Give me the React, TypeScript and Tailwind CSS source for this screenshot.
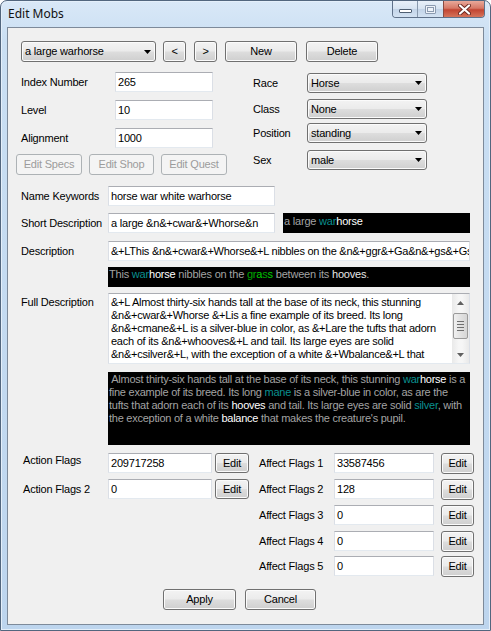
import React from 'react';

const btnOn =
  'border-[#707070] text-black bg-[linear-gradient(#f3f3f3,#ebebeb_48%,#dddddd_52%,#cfcfcf)] shadow-[inset_0_0_0_1px_#fbfbfb]';
const btnOff = 'border-[#adb2b5] text-[#9c9c9c] bg-[#f4f4f4]';

function Btn({ label, className = '', disabled = false }: { label: string; className?: string; disabled?: boolean }) {
  return (
    <div
      className={`flex shrink-0 items-center justify-center rounded-[3px] border text-[11px] leading-none ${
        disabled ? btnOff : btnOn
      } ${className}`}
    >
      {label}
    </div>
  );
}

function Arrow() {
  return (
    <svg width="7" height="4" viewBox="0 0 7 4" className="shrink-0">
      <polygon points="0,0 7,0 3.5,4" fill="#000" />
    </svg>
  );
}

function Combo({ value, className = '' }: { value: string; className?: string }) {
  return (
    <div
      className={`flex shrink-0 items-center rounded-[3px] border pl-[3px] pr-[4px] text-[11px] leading-none ${btnOn} ${className}`}
    >
      <span className="flex-1">{value}</span>
      <Arrow />
    </div>
  );
}

function TextBox({ value, className = '' }: { value: string; className?: string }) {
  return (
    <div
      className={`flex h-[20px] shrink-0 items-center overflow-hidden whitespace-nowrap border border-[#dbdfe6] border-t-[#abadb3] border-b-[#e3e9ef] bg-white px-[2px] text-[11px] leading-none ${className}`}
    >
      {value}
    </div>
  );
}

const G = 'text-[#a3a3a3]';
const C = 'text-[#0a8f8f]';
const W = 'text-white';

function ScrollBar() {
  return (
    <div className="flex w-[17px] shrink-0 flex-col items-center bg-[linear-gradient(90deg,#e9e9e9,#f6f6f6_40%,#f6f6f6_60%,#e9e9e9)]">
      <div className="flex h-[17px] w-full items-center justify-center">
        <svg width="7" height="4" viewBox="0 0 7 4">
          <polygon points="0,4 7,4 3.5,0" fill="#606060" />
        </svg>
      </div>
      <div className="mt-[2px] flex h-[26px] w-[15px] flex-col items-center justify-center gap-[2px] rounded-[2px] border border-[#9a9a9a] bg-[linear-gradient(90deg,#f0f0f0,#e2e2e2_50%,#d6d6d6)]">
        <div className="h-px w-[7px] bg-[#6f6f6f]" />
        <div className="h-px w-[7px] bg-[#6f6f6f]" />
        <div className="h-px w-[7px] bg-[#6f6f6f]" />
        <div className="h-px w-[7px] bg-[#6f6f6f]" />
      </div>
      <div className="flex-1" />
      <div className="flex h-[17px] w-full items-center justify-center">
        <svg width="7" height="4" viewBox="0 0 7 4">
          <polygon points="0,0 7,0 3.5,4" fill="#606060" />
        </svg>
      </div>
    </div>
  );
}

function CaptionButtons() {
  return (
    <div className="mr-[5px] flex h-[17px] overflow-hidden rounded-b-[4px] border border-t-0 border-[#5f7189]">
      <div className="flex w-[25px] items-center justify-center border-r border-[#8899ad] bg-[linear-gradient(#e8f0f9,#d6e3f1_50%,#c3d4e8_52%,#d3e2f2)]">
        <div className="mt-[4px] h-[4px] w-[13px] rounded-[1px] border border-[#4f5f72] bg-white" />
      </div>
      <div className="flex w-[26px] items-center justify-center border-r border-[#8a4a40] bg-[linear-gradient(#e8f0f9,#d6e3f1_50%,#c3d4e8_52%,#d3e2f2)]">
        <div className="flex h-[9px] w-[11px] items-center justify-center rounded-[1px] border border-[#8c9bb0] bg-[#eef3f9]">
          <div className="h-[5px] w-[7px] border border-[#8c9bb0]" />
        </div>
      </div>
      <div className="flex w-[40px] items-center justify-center bg-[linear-gradient(#e9a99a,#d67866_45%,#c24532_55%,#d5745a)]">
        <svg width="13" height="11" viewBox="0 0 13 11">
          <path d="M2 1.5 L11 9.5 M11 1.5 L2 9.5" stroke="#6b2a22" strokeWidth="4" strokeLinecap="round" />
          <path d="M2 1.5 L11 9.5 M11 1.5 L2 9.5" stroke="#ffffff" strokeWidth="2.2" strokeLinecap="round" />
        </svg>
      </div>
    </div>
  );
}

export default function App() {
  return (
    <div className="font-['Liberation_Sans',Arial,sans-serif] text-black">
      <div className="flex h-[631px] w-[491px] flex-col rounded-t-[7px] border border-[#52667e] bg-[linear-gradient(180deg,#d9e8f7,#cadff3_40px,#bdd5ee)] shadow-[inset_0_0_0_1px_#e4effa]">
        {/* Title bar */}
        <div className="flex h-[26px] shrink-0 items-start">
          <span className="ml-[7px] mt-[5px] font-['Noto_Sans','Liberation_Sans',sans-serif] text-[12px] leading-[16px] text-[#111]">
            Edit Mobs
          </span>
          <div className="flex-1" />
          <CaptionButtons />
        </div>

        {/* Client */}
        <div className="mx-[6px] mb-[5px] flex-1 border border-[#7d8a9a] bg-[#f0f0f0] tracking-[-0.2px]">
          {/* Row 1 */}
          <div className="ml-[13px] mt-[13px] flex items-center">
            <Combo value="a large warhorse" className="h-[21px] w-[135px]" />
            <Btn label="<" className="ml-[7px] h-[21px] w-[23px]" />
            <Btn label=">" className="ml-[8px] h-[21px] w-[23px]" />
            <Btn label="New" className="ml-[8px] h-[21px] w-[72px]" />
            <Btn label="Delete" className="ml-[9px] h-[21px] w-[72px]" />
          </div>

          {/* Row 2: stats + combos */}
          <div className="mt-[10px] flex h-[103px]">
            <div className="w-[245px] shrink-0">
              <div className="ml-[13px] flex h-[20px] items-center">
                <span className="w-[94px] text-[11px]">Index Number</span>
                <TextBox value="265" className="w-[98px]" />
              </div>
              <div className="ml-[13px] mt-[8px] flex h-[20px] items-center">
                <span className="w-[94px] text-[11px]">Level</span>
                <TextBox value="10" className="w-[98px]" />
              </div>
              <div className="ml-[13px] mt-[8px] flex h-[20px] items-center">
                <span className="w-[94px] text-[11px]">Alignment</span>
                <TextBox value="1000" className="w-[98px]" />
              </div>
              <div className="ml-[8px] mt-[6px] flex">
                <Btn label="Edit Specs" disabled className="h-[21px] w-[66px]" />
                <Btn label="Edit Shop" disabled className="ml-[7px] h-[21px] w-[65px]" />
                <Btn label="Edit Quest" disabled className="ml-[7px] h-[21px] w-[66px]" />
              </div>
            </div>
            <div className="flex-1">
              <div className="mt-[1px] flex h-[20px] items-center">
                <span className="w-[54px] text-[11px]">Race</span>
                <Combo value="Horse" className="h-[20px] w-[120px]" />
              </div>
              <div className="mt-[6px] flex h-[20px] items-center">
                <span className="w-[54px] text-[11px]">Class</span>
                <Combo value="None" className="h-[20px] w-[120px]" />
              </div>
              <div className="mt-[4px] flex h-[20px] items-center">
                <span className="w-[54px] text-[11px]">Position</span>
                <Combo value="standing" className="h-[20px] w-[120px]" />
              </div>
              <div className="mt-[7px] flex h-[20px] items-center">
                <span className="w-[54px] text-[11px]">Sex</span>
                <Combo value="male" className="h-[20px] w-[120px]" />
              </div>
            </div>
          </div>

          {/* Descriptions */}
          <div className="ml-[13px] mt-[11px] flex h-[20px] items-center">
            <span className="w-[87px] text-[11px]">Name Keywords</span>
            <TextBox value="horse war white warhorse" className="w-[167px]" />
          </div>
          <div className="ml-[13px] mt-[7px] flex h-[20px] items-center">
            <span className="w-[87px] text-[11px]">Short Description</span>
            <TextBox value="a large &n&+cwar&+Whorse&n" className="w-[167px]" />
            <div className="ml-[8px] h-[20px] w-[187px] bg-black pl-[1px] pt-[2px] text-[11px] leading-[13px]">
              <span className={G}>a large </span>
              <span className={C}>war</span>
              <span className={W}>horse</span>
            </div>
          </div>
          <div className="ml-[13px] mt-[8px] flex h-[20px] items-center">
            <span className="w-[87px] text-[11px]">Description</span>
            <TextBox
              value="&+LThis &n&+cwar&+Whorse&+L nibbles on the &n&+ggr&+Ga&n&+gs&+Gs&"
              className="w-[362px] tracking-[-0.25px]"
            />
          </div>
          <div className="ml-[100px] mt-[6px] h-[20px] w-[362px] whitespace-nowrap bg-black pl-[1px] pt-px text-[11px] leading-[13px]">
            <span className={G}>This </span>
            <span className={C}>war</span>
            <span className={W}>horse</span>
            <span className={G}> nibbles on the </span>
            <span className="text-[#00a400]">gr</span>
            <span className="text-[#00d000]">a</span>
            <span className="text-[#00a400]">s</span>
            <span className="text-[#00d000]">s</span>
            <span className={G}> between its </span>
            <span className="text-[#e6e6e6]">hooves</span>
            <span className={G}>.</span>
          </div>
          <div className="ml-[13px] mt-[6px] flex">
            <span className="w-[87px] pt-[3px] text-[11px] leading-[13px]">Full Description</span>
            <div className="flex h-[71px] w-[362px] border border-[#dbdfe6] border-t-[#abadb3] border-b-[#e3e9ef] bg-white">
              <div className="flex-1 overflow-hidden whitespace-nowrap pl-[2px] pt-[2px] text-[11px] leading-[13px] tracking-[-0.25px]">
                <div>&amp;+L Almost thirty-six hands tall at the base of its neck, this stunning</div>
                <div>&amp;n&amp;+cwar&amp;+Whorse &amp;+Lis a fine example of its breed. Its long</div>
                <div>&amp;n&amp;+cmane&amp;+L is a silver-blue in color, as &amp;+Lare the tufts that adorn</div>
                <div>each of its &amp;n&amp;+whooves&amp;+L and tail. Its large eyes are solid</div>
                <div>&amp;n&amp;+csilver&amp;+L, with the exception of a white &amp;+Wbalance&amp;+L that</div>
              </div>
              <ScrollBar />
            </div>
          </div>
          <div className="ml-[100px] mt-[8px] h-[73px] w-[362px] overflow-hidden whitespace-pre bg-black pl-[1px] pt-[1px] text-[11px] leading-[13px] tracking-[-0.25px]">
            <div>
              <span className={G}> Almost thirty-six hands tall at the base of its neck, this stunning </span>
              <span className={C}>war</span>
              <span className={W}>horse</span>
              <span className={G}> is a</span>
            </div>
            <div>
              <span className={G}>fine example of its breed. Its long </span>
              <span className={C}>mane</span>
              <span className={G}> is a silver-blue in color, as are the</span>
            </div>
            <div>
              <span className={G}>tufts that adorn each of its </span>
              <span className={W}>hooves</span>
              <span className={G}> and tail. Its large eyes are solid </span>
              <span className={C}>silver</span>
              <span className={G}>, with</span>
            </div>
            <div>
              <span className={G}>the exception of a white </span>
              <span className={W}>balance</span>
              <span className={G}> that makes the creature's pupil.</span>
            </div>
          </div>

          {/* Flags */}
          <div className="mt-[8px] flex">
            <div className="w-[251px] shrink-0">
              <div className="ml-[15px] flex h-[20px] items-center">
                <span className="w-[85px] pb-[5px] text-[11px]">Action Flags</span>
                <TextBox value="209717258" className="w-[104px]" />
                <Btn label="Edit" className="ml-[3px] h-[20px] w-[34px]" />
              </div>
              <div className="ml-[15px] mt-[6px] flex h-[20px] items-center">
                <span className="w-[85px] text-[11px]">Action Flags 2</span>
                <TextBox value="0" className="w-[104px]" />
                <Btn label="Edit" className="ml-[3px] h-[20px] w-[34px]" />
              </div>
            </div>
            <div className="flex-1">
              {[
                ['Affect Flags 1', '33587456', 'mt-0'],
                ['Affect Flags 2', '128', 'mt-[6px]'],
                ['Affect Flags 3', '0', 'mt-[6px]'],
                ['Affect Flags 4', '0', 'mt-[6px]'],
                ['Affect Flags 5', '0', 'mt-[5px]'],
              ].map(([label, value, mt]) => (
                <div key={label} className={`flex h-[20px] items-center ${mt}`}>
                  <span className="w-[75px] text-[11px]">{label}</span>
                  <TextBox value={value} className="w-[100px]" />
                  <Btn label="Edit" className="ml-[7px] h-[21px] w-[33px]" />
                </div>
              ))}
            </div>
          </div>

          {/* Apply / Cancel */}
          <div className="ml-[155px] mt-[13px] flex">
            <Btn label="Apply" className="h-[21px] w-[73px]" />
            <Btn label="Cancel" className="ml-[9px] h-[21px] w-[71px]" />
          </div>
        </div>
      </div>
    </div>
  );
}
